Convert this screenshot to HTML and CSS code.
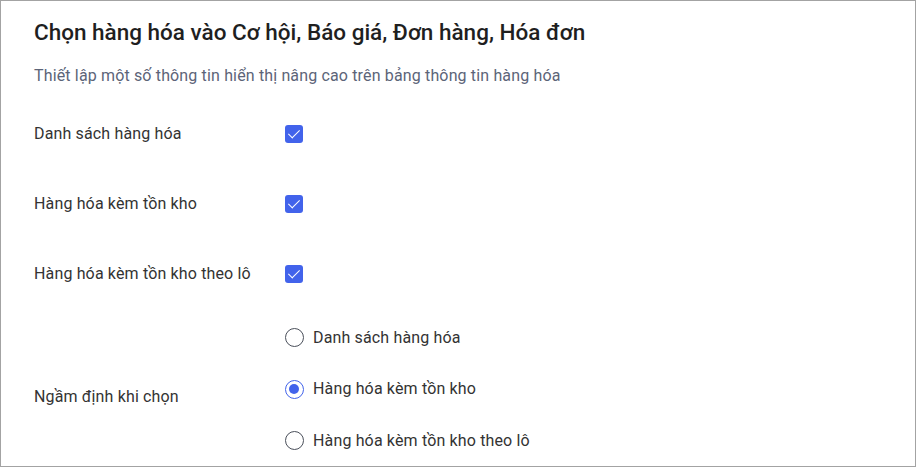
FILE: index.html
```html
<html lang="vi">
	<head>
		<meta charset="utf-8" />
		<title>Chọn hàng hóa</title>
		<link rel="stylesheet" href="styles.css">
	</head>
	<body>
		<div id="panel">
			<h1 class="title">Chọn hàng hóa vào Cơ hội, Báo giá, Đơn hàng, Hóa đơn</h1>
			<p class="subtitle">Thiết lập một số thông tin hiển thị nâng cao trên bảng thông tin hàng hóa</p>

			<div class="setting-row">
				<div class="setting-label">Danh sách hàng hóa</div>
				<label class="check checked"><input type="checkbox" checked /><span class="box"></span></label>
			</div>
			<div class="setting-row">
				<div class="setting-label">Hàng hóa kèm tồn kho</div>
				<label class="check checked"><input type="checkbox" checked /><span class="box"></span></label>
			</div>
			<div class="setting-row">
				<div class="setting-label">Hàng hóa kèm tồn kho theo lô</div>
				<label class="check checked"><input type="checkbox" checked /><span class="box"></span></label>
			</div>

			<div class="setting-row default-row">
				<div class="setting-label default-label">Ngầm định khi chọn</div>
				<div class="radio-list">
					<label class="radio"><input type="radio" name="default" /><span class="dot"></span>Danh sách hàng hóa</label>
					<label class="radio"><input type="radio" name="default" checked /><span class="dot"></span>Hàng hóa kèm tồn kho</label>
					<label class="radio"><input type="radio" name="default" /><span class="dot"></span>Hàng hóa kèm tồn kho theo lô</label>
				</div>
			</div>
		</div>
	</body>
</html>
```

FILE: styles.css
```css
body
{
	margin: 0;
	padding: 0;
	background: #ffffff;
	font-family: Roboto, "Noto Sans", sans-serif;
	font-size: 16px;
	letter-spacing: 0.15px;
	color: #333333;
}

div#panel
{
	box-sizing: border-box;
	width: 916px;
	height: 467px;
	border: 1px solid #a3a3a3;
	padding: 15px 0 0 33px;
	overflow: hidden;
}

h1.title
{
	margin: 0;
	font-size: 22.5px;
	font-weight: 500;
	line-height: 32px;
	letter-spacing: 0;
	color: #1f1f1f;
}

p.subtitle
{
	margin: 18px 0 28px 0;
	line-height: 20px;
	color: #5c6478;
}

.setting-row
{
	display: flex;
	align-items: center;
	height: 40px;
	margin-bottom: 30px;
}

.setting-label
{
	width: 251px;
	flex: none;
	line-height: 20px;
}

/* checkbox */
.check input,
.radio input
{
	display: none;
}

.check .box
{
	position: relative;
	display: block;
	width: 18px;
	height: 18px;
	border-radius: 3px;
	background: #4263eb;
}

.check .box::after
{
	content: "";
	position: absolute;
	left: 6px;
	top: 2px;
	width: 5px;
	height: 10px;
	border: solid #ffffff;
	border-width: 0 1.5px 1.5px 0;
	transform: rotate(45deg);
}

/* radios */
.default-row
{
	height: auto;
	align-items: flex-start;
	margin: -2px 0 0 0;
}

.default-label
{
	padding-top: 65px;
}

.radio-list
{
	display: flex;
	flex-direction: column;
	gap: 20.5px;
}

.radio
{
	display: flex;
	align-items: center;
	height: 31px;
	line-height: 20px;
}

.radio .dot
{
	box-sizing: border-box;
	position: relative;
	width: 19px;
	height: 19px;
	margin-right: 9px;
	border: 1.5px solid #4a4f5a;
	border-radius: 50%;
}

.radio input:checked + .dot
{
	border-color: #4263eb;
}

.radio input:checked + .dot::after
{
	content: "";
	position: absolute;
	left: 3px;
	top: 3px;
	width: 10px;
	height: 10px;
	border-radius: 50%;
	background: #4263eb;
}
```
